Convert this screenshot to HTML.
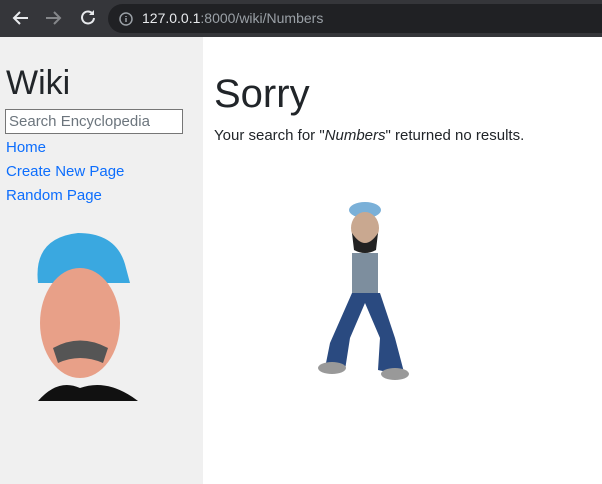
<!DOCTYPE html>
<html><head><style>
*{margin:0;padding:0;box-sizing:border-box}
body{width:602px;height:484px;overflow:hidden;background:#fff;font-family:"Liberation Sans","DejaVu Sans",sans-serif;position:relative}
.bar{position:absolute;left:0;top:0;width:602px;height:37px;background:#35363a}
.url{position:absolute;left:108px;top:4px;width:520px;height:29px;border-radius:15px;background:#202124}
.url span{position:absolute;left:34px;top:6px;font-size:14px;color:#9aa0a6}
.url b{font-weight:normal;color:#e8eaed}
.side{position:absolute;left:0;top:37px;width:203px;height:447px;background:#f0f0f0}
h1{position:absolute;left:6px;top:64px;font-size:34px;font-weight:normal;color:#212529}
.inp{position:absolute;left:5px;top:109px;width:178px;height:25px;border:1px solid #767676;background:#fff;font-size:15px;color:#6c757d;padding:3px 3px}
a{position:absolute;left:6px;font-size:15px;color:#0d6efd;text-decoration:none}
h2{position:absolute;left:214px;top:72px;font-size:40px;font-weight:normal;color:#212529}
p{position:absolute;left:214px;top:127px;font-size:15px;color:#212529}
</style></head><body>
<div class="bar">
<svg width="110" height="37" style="position:absolute;left:0;top:0">
<g stroke="#e8eaed" stroke-width="2" fill="none"><path d="M28 18H14M20 12l-6 6 6 6"/></g>
<g stroke="#85878a" stroke-width="2" fill="none"><path d="M46 18h14M54 12l6 6-6 6"/></g>
<path d="M92 13a6 6 0 1 0 2 5" stroke="#e8eaed" stroke-width="2" fill="none"/><path d="M94 10v5h-5z" fill="#e8eaed"/>
</svg>
<div class="url"><svg width="16" height="16" style="position:absolute;left:10px;top:7px"><circle cx="8" cy="8" r="6" stroke="#9aa0a6" stroke-width="1.5" fill="none"/><path d="M8 7v4M8 5v1" stroke="#9aa0a6" stroke-width="1.5"/></svg><span><b>127.0.0.1</b>:8000/wiki/Numbers</span></div>
</div>
<div class="side"></div>
<h1>Wiki</h1>
<div class="inp">Search Encyclopedia</div>
<a style="top:139px">Home</a>
<a style="top:163px">Create New Page</a>
<a style="top:187px">Random Page</a>
<svg width="130" height="175" style="position:absolute;left:18px;top:228px">
<path d="M20 55 Q15 10 60 5 Q100 5 108 40 L112 55 Z" fill="#3aa8e0"/>
<ellipse cx="62" cy="95" rx="40" ry="55" fill="#e8a088"/>
<path d="M35 120 Q62 105 90 120 L85 135 Q62 125 40 135Z" fill="#555"/>
<path d="M20 173 Q40 150 62 160 Q90 150 120 173Z" fill="#111"/>
</svg>
<h2>Sorry</h2>
<p>Your search for "<i>Numbers</i>" returned no results.</p>
<svg width="110" height="185" style="position:absolute;left:310px;top:198px">
<ellipse cx="55" cy="12" rx="16" ry="8" fill="#7ab0d8"/>
<ellipse cx="55" cy="30" rx="14" ry="16" fill="#c9a890"/>
<path d="M42 35 Q55 55 68 35 L66 52 Q55 58 44 52Z" fill="#222"/>
<rect x="42" y="55" width="26" height="45" fill="#7d8e9e"/>
<path d="M42 95 L20 145 L15 170 L35 172 L40 140 L55 105 L70 140 L68 172 L95 178 L85 140 L70 95Z" fill="#2a4a80"/>
<ellipse cx="22" cy="170" rx="14" ry="6" fill="#999"/>
<ellipse cx="85" cy="176" rx="14" ry="6" fill="#999"/>
</svg>
</body></html>
